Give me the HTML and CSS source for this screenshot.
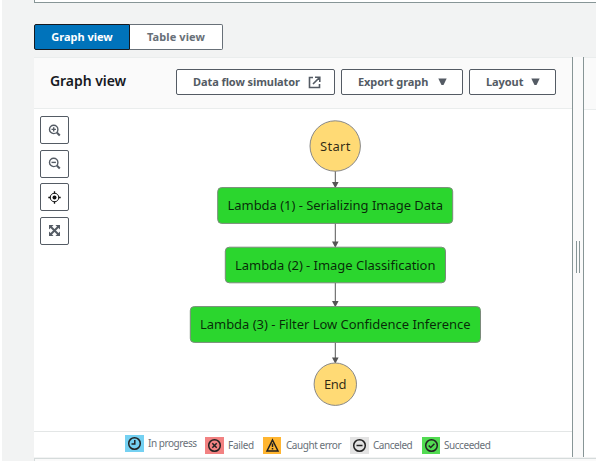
FILE: index.html
```html
<!DOCTYPE html>
<html lang="en">
<head>
<meta charset="utf-8">
<title>Graph view</title>
<link rel="stylesheet" href="styles.css">
</head>
<body>
<main class="page">
  <div class="box-above"></div>
  <nav class="tabs">
    <button class="tab tab-active"><span>Graph view</span></button>
    <button class="tab tab-idle"><span>Table view</span></button>
  </nav>
  <div class="panels">
    <section class="graph-panel">
      <header class="panel-header">
        <h2>Graph view</h2>
        <button class="btn btn-sim"><span>Data flow simulator</span>
          <svg width="13" height="13" viewBox="0 0 13 13"><path d="M5 1.5H1.5v10h10V8M7 1.2h4.800V6M11.500 1.500L5 8" fill="none" stroke="#545b64" stroke-width="1.6"/></svg>
        </button>
        <button class="btn btn-export"><span>Export graph</span>
          <svg width="9" height="8" viewBox="0 0 9 8"><path d="M.3.5h8.400L5.500 7h-2z" fill="#545b64"/></svg>
        </button>
        <button class="btn btn-layout"><span>Layout</span>
          <svg width="9" height="8" viewBox="0 0 9 8"><path d="M.3.5h8.400L5.500 7h-2z" fill="#545b64"/></svg>
        </button>
      </header>
      <div class="canvas">
        <div class="tools">
          <button class="tool"><svg width="13" height="13" viewBox="0 0 13 13" fill="none" stroke="#545b64" stroke-width="1.4"><circle cx="5.7" cy="5.4" r="4.2"/><path d="M8.8 8.5l3 3" stroke-width="2"/><path d="M3.5 5.4h4.4M5.7 3.2v4.4"/></svg></button>
          <button class="tool"><svg width="13" height="13" viewBox="0 0 13 13" fill="none" stroke="#545b64" stroke-width="1.4"><circle cx="5.7" cy="5.4" r="4.2"/><path d="M8.8 8.5l3 3" stroke-width="2"/><path d="M3.5 5.4h4.4"/></svg></button>
          <button class="tool"><svg width="13" height="13" viewBox="0 0 13 13" fill="none" stroke="#111"><circle cx="6.5" cy="6.5" r="4.3"/><circle cx="6.5" cy="6.5" r="2" fill="#111" stroke="none"/><path d="M6.5.3v2.4M6.5 10.3v2.4M.3 6.5h2.4M10.3 6.5h2.4" stroke-width="1.3"/></svg></button>
          <button class="tool"><svg width="13" height="13" viewBox="0 0 13 13"><path d="M2.5 2.5l8 8M10.5 2.5l-8 8" stroke="#545b64" stroke-width="2"/><path d="M1 1h4.600L1 5.600zM12 1v4.600L7.400 1zM1 12V7.400L5.600 12zM12 12H7.400L12 7.400z" fill="#545b64"/></svg></button>
        </div>
        <svg class="graph" width="300" height="300" viewBox="184 112 300 300">
          <g class="edges">
            <path d="M335.300 171v12M335.300 223v20M335.300 283v19M335.300 342.500v16"/>
            <path class="heads" d="M332 182h6.600l-3.300 6.300zM332 241.500h6.600l-3.300 6.300zM332 301h6.600l-3.300 6.300zM332 357.500h6.600l-3.300 6.300z"/>
          </g>
          <circle class="terminal" cx="335.200" cy="146" r="25.200"/>
          <rect class="state" x="217.700" y="187.600" width="235" height="35.800" rx="4"/>
          <rect class="state" x="225.300" y="247.200" width="220.200" height="35.600" rx="4"/>
          <rect class="state" x="190.300" y="306.600" width="290.200" height="35.800" rx="4"/>
          <circle class="terminal" cx="335.300" cy="384.200" r="21.200"/>
          <g class="labels">
            <text x="320" y="151" textLength="30.500">Start</text>
            <text x="227.500" y="210" textLength="215.500">Lambda (1) - Serializing Image Data</text>
            <text x="235" y="270" textLength="200.500">Lambda (2) - Image Classification</text>
            <text x="200" y="329" textLength="270.500">Lambda (3) - Filter Low Confidence Inference</text>
            <text x="324" y="389" textLength="22.500">End</text>
          </g>
        </svg>
      </div>
      <footer class="legend">
        <div class="item item-progress"><i class="swatch blue"><svg width="15" height="15" viewBox="0 0 15 15"><circle cx="7.500" cy="7.500" r="5.800"/><path d="M7.800 4v4H4.500"/></svg></i><span>In progress</span></div>
        <div class="item item-failed"><i class="swatch red"><svg width="15" height="15" viewBox="0 0 15 15"><circle cx="7.500" cy="7.500" r="5.800"/><path d="M5.300 5.300l4.400 4.400M9.700 5.300L5.300 9.700"/></svg></i><span>Failed</span></div>
        <div class="item item-caught"><i class="swatch orange"><svg width="15" height="15" viewBox="0 0 15 15"><path d="M7.500 2L13 13H2zM7.500 5.500V9M7.500 10v1.500"/></svg></i><span>Caught error</span></div>
        <div class="item item-canceled"><i class="swatch gray"><svg width="15" height="15" viewBox="0 0 15 15"><circle cx="7.500" cy="7.500" r="5.800"/><path d="M4.500 7.500h6"/></svg></i><span>Canceled</span></div>
        <div class="item item-succeeded"><i class="swatch green"><svg width="15" height="15" viewBox="0 0 15 15"><circle cx="7.500" cy="7.500" r="5.800"/><path d="M4.700 7.500l2 2 3.700-3.700"/></svg></i><span>Succeeded</span></div>
      </footer>
    </section>
    <div class="splitter"><div class="grip"></div></div>
    <section class="side-panel"><div class="side-header"></div></section>
  </div>
  <div class="box-below"></div>
</main>
</body>
</html>
```
FILE: styles.css
```css
* { box-sizing: border-box; }
body { margin: 0; background: #fff; font-family: "Noto Sans", "Open Sans", sans-serif; overflow: hidden; }
button { font-family: inherit; margin: 0; padding: 0; background: #fff; display: flex; align-items: center; text-align: left; }
span { white-space: nowrap; }
svg { display: block; flex: none; }
.page { height: 461px; margin-left: 2px; padding-left: 32px; background: #f2f3f3; display: flex; flex-direction: column; }
.box-above { height: 3px; flex: none; background: #fff; border-left: 1px solid #879596; border-bottom: 1px solid #879596; }
.tabs { display: flex; margin-top: 21px; height: 26px; flex: none; }
.tab { height: 26px; justify-content: center; font-size: 11px; font-weight: 700; border: 1px solid #687078; color: #687078; padding-bottom: 2px; }
.tab-active { width: 96px; background: #0073bb; border-color: #16191f; color: #fff; border-radius: 2px 0 0 2px; }
.tab-idle { width: 93px; border-left: 0; border-radius: 0 2px 2px 0; letter-spacing: .1px; }
.panels { display: flex; margin-top: 7px; height: 400px; flex: none; }
.graph-panel { width: 538px; display: flex; flex-direction: column; background: #fff; }
.panel-header { height: 52px; flex: none; display: flex; align-items: center; padding: 0 0 2px 16px; background: #fafafa; border-top: 1px solid #eaeded; border-bottom: 1px solid #eaeded; }
h2 { margin: 0; width: 126px; flex: none; font-size: 14px; font-weight: 600; line-height: 20px; color: #16191f; letter-spacing: -.05px; padding-bottom: 2px; }
.btn { height: 26px; flex: none; border: 1px solid #545b64; border-radius: 2px; color: #545b64; font-size: 11px; font-weight: 700; padding-left: 16px; }
.btn span { flex: none; padding-bottom: 1px; letter-spacing: -.08px; }
.btn-sim { width: 159px; margin-right: 6px; }
.btn-sim span { width: 115px; }
.btn-export { width: 122px; margin-right: 6px; }
.btn-export span { width: 80px; }
.btn-layout { width: 87px; }
.btn-layout span { width: 45px; }
.canvas { flex: 1; display: flex; align-items: flex-start; padding: 3px 0 0 6px; }
.tools { width: 144px; padding-top: 4px; display: flex; flex-direction: column; gap: 5.5px; }
.tool { width: 29px; height: 28px; justify-content: center; border: 1px solid #545b64; border-radius: 2px; }
.edges path { stroke: #555; stroke-width: 1; fill: none; }
.edges .heads { fill: #555; stroke: none; }
.terminal { fill: #ffda75; stroke: #888; }
.state { fill: #2bd62e; stroke: #7b8a7b; }
.labels { font-size: 13px; fill: #000; fill-opacity: .82; }
.legend { height: 26px; flex: none; border-top: 1px solid #e3e6e6; display: flex; align-items: flex-start; padding: 5px 0 0 91px; font-size: 10px; color: #687078; letter-spacing: -.45px; }
.item { display: flex; align-items: center; height: 17px; flex: none; }
.item span { padding-left: 4px; margin-top: -2px; }
.item-progress { width: 80px; margin-top: -2px; }
.item-failed { width: 58px; letter-spacing: -.3px; }
.item-caught { width: 87px; }
.item-caught span { padding-left: 5px; }
.item-canceled { width: 72px; }
.swatch { width: 19px; height: 17px; display: flex; align-items: center; justify-content: center; flex: none; }
.swatch svg { fill: none; stroke: #222; stroke-width: 1.5; }
.blue { background: #75d1f2; }
.red { background: #f28282; }
.orange { background: #ffb530; }
.gray { background: #e3e3e3; }
.green { background: #52db52; }
.item-caught .swatch, .item-succeeded .swatch { width: 18px; }
.splitter { width: 12px; flex: none; background: #fafafa; border: 1px solid #879596; border-top: 0; border-bottom: 0; display: flex; align-items: center; justify-content: center; }
.grip { width: 4px; height: 32px; border: 1px solid #879596; border-top: 0; border-bottom: 0; }
.side-panel { flex: 1; background: #fff; }
.side-header { height: 53px; background: #fafafa; border-top: 1px solid #eaeded; border-bottom: 1px solid #eaeded; }
.box-below { margin-top: 1px; height: 3px; flex: none; background: #fafafa; border-left: 1px solid #d5dbdb; border-top: 1px solid #d5dbdb; }
```
